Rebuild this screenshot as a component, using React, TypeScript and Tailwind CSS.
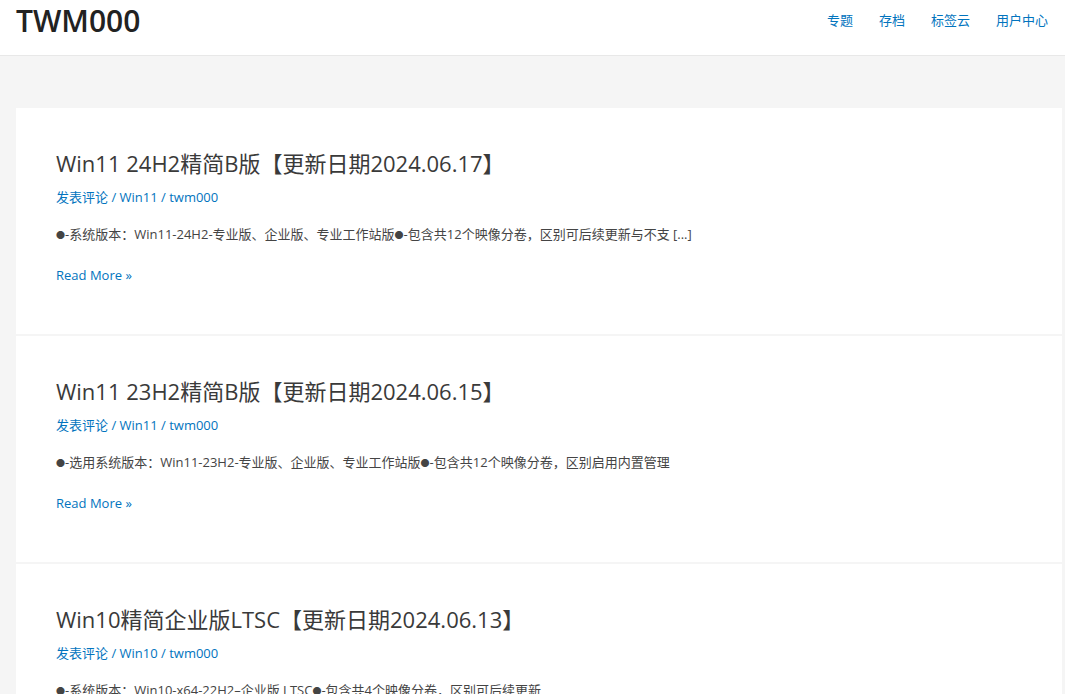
import React from "react";

const posts = [
  {
    title: "Win11 24H2精简B版【更新日期2024.06.17】",
    cat: "Win11",
    excerpt: ["-系统版本：Win11-24H2-专业版、企业版、专业工作站版", "-包含共12个映像分卷，区别可后续更新与不支 [...]"],
  },
  {
    title: "Win11 23H2精简B版【更新日期2024.06.15】",
    cat: "Win11",
    excerpt: ["-选用系统版本：Win11-23H2-专业版、企业版、专业工作站版", "-包含共12个映像分卷，区别启用内置管理"],
  },
  {
    title: "Win10精简企业版LTSC【更新日期2024.06.13】",
    cat: "Win10",
    excerpt: ["-系统版本：Win10-x64-22H2–企业版 LTSC", "-包含共4个映像分卷，区别可后续更新"],
  },
];

function Dot() {
  return <span className="text-[9px] align-[1px] text-[#444]">●</span>;
}

export default function App() {
  return (
    <div
      className="bg-[#f5f5f5] overflow-hidden h-[694px]"
      style={{ fontFamily: '"Open Sans", "Noto Sans CJK SC", sans-serif' }}
    >
      <header className="bg-white h-[56px] border-b border-[#e8e8e8] flex items-start justify-between pl-[16px] pr-[17px]">
        <div className="text-[30px] leading-[42px] font-semibold text-[#222]">TWM000</div>
        <nav className="flex gap-[26px] text-[13px] leading-[40px] text-[#0274be]">
          <span>专题</span>
          <span>存档</span>
          <span>标签云</span>
          <span>用户中心</span>
        </nav>
      </header>
      <main className="pt-[52px] pl-[16px] pr-[3px] flex flex-col gap-[2px]">
        {posts.map((p, i) => (
          <article key={i} className="bg-white px-[40px] pt-[39px] h-[226px]">
            <h2 className="text-[22px] leading-[32px] text-[#3a3a3a] font-normal">{p.title}</h2>
            <div className="mt-[7px] text-[13px] leading-[22px] text-[#0274be]">
              发表评论 / {p.cat} / twm000
            </div>
            <p className="mt-[15px] text-[13px] leading-[22px] text-[#444]">
              <Dot />
              {p.excerpt[0]}
              <Dot />
              {p.excerpt[1]}
            </p>
            <div className="mt-[18px] text-[13px] leading-[22px] text-[#0274be]">Read More »</div>
          </article>
        ))}
      </main>
    </div>
  );
}
